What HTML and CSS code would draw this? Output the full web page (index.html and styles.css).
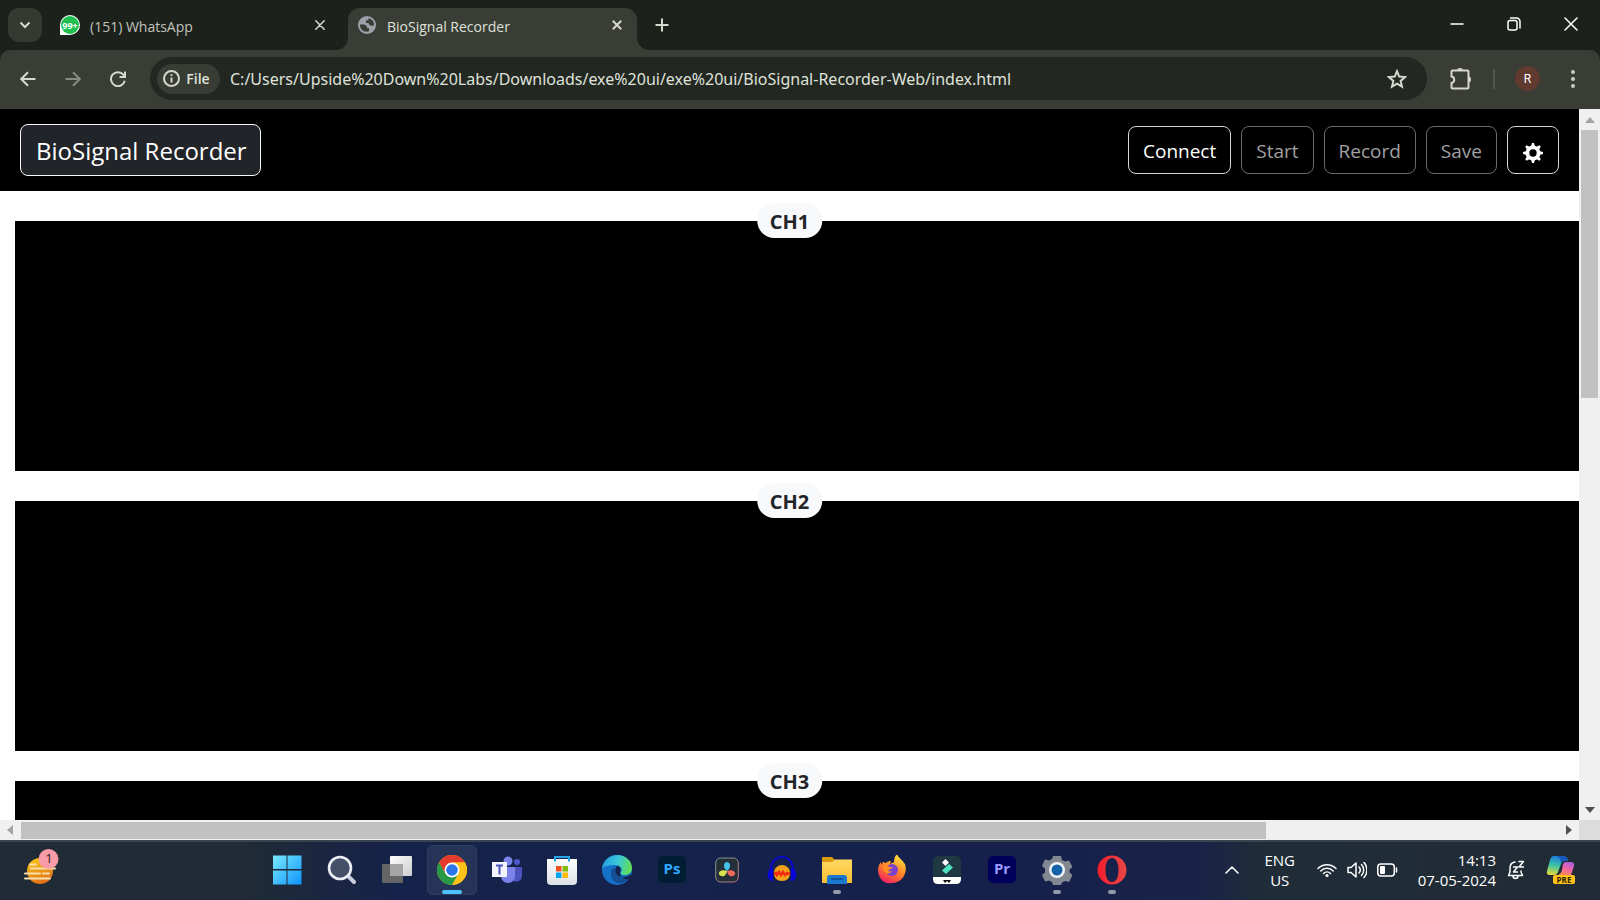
FILE: index.html
```html
<!DOCTYPE html>
<html lang="en">
<head>
<meta charset="utf-8">
<title>BioSignal Recorder</title>
<link rel="stylesheet" href="styles.css">
</head>
<body>
<header class="tabstrip">
  <button class="tab-search" aria-label="Search tabs"><svg width="12" height="8" viewBox="0 0 12 8"><path d="M1.5 1.5 6 6l4.500-4.500" class="line bold"/></svg></button>
  <div class="tab">
    <svg width="20" height="20" viewBox="0 0 20 20"><path d="M0 20V10A10 10 0 1 1 10 20z" fill="#fff"/><circle cx="10" cy="10" r="9" fill="#1fbf50"/><text x="10" y="13.500" text-anchor="middle" class="badge-99">99+</text></svg>
    <span class="tab-title">(151) WhatsApp</span>
    <button class="tab-close" aria-label="Close tab"><svg width="10" height="10" viewBox="0 0 10 10"><path d="M.8.8l8.400 8.400M9.200.8.800 9.200" class="line"/></svg></button>
  </div>
  <div class="tab active">
    <svg width="18" height="18" viewBox="0 0 18 18"><circle cx="9" cy="9" r="9" fill="#9da1aa"/><path d="M2 8.500H6.500L9 10.500V12h2v3.300C6.500 17 1.500 13.500 2 8.500zM10.500 2.200V4L8 4.500V7h2.500l1 2 2 .8H15.800C16.800 6 14 2.800 10.500 2.200z" fill="#3a3d35"/></svg>
    <span class="tab-title">BioSignal Recorder</span>
    <button class="tab-close" aria-label="Close tab"><svg width="10" height="10" viewBox="0 0 10 10"><path d="M.8.8l8.400 8.400M9.200.8.800 9.200" class="line bold"/></svg></button>
  </div>
  <button class="new-tab" aria-label="New tab"><svg width="14" height="14" viewBox="0 0 14 14"><path d="M7 .5v13M.5 7h13" class="line bold"/></svg></button>
  <div class="window-controls">
    <button aria-label="Minimize"><svg width="14" height="14" viewBox="0 0 14 14"><path d="M1 7h12" class="line white"/></svg></button>
    <button aria-label="Restore"><svg width="14" height="14" viewBox="0 0 14 14"><rect x="1" y="3.500" width="9" height="9.500" rx="2" class="line white"/><path d="M3.500 1H9.500A3.500 3.500 0 0 1 13 4.500V11" class="line white"/></svg></button>
    <button aria-label="Close"><svg width="14" height="14" viewBox="0 0 14 14"><path d="M1 1l12 12M13 1 1 13" class="line white"/></svg></button>
  </div>
</header>

<nav class="toolbar">
  <button class="tool" aria-label="Back"><svg width="16" height="16" viewBox="0 0 16 16"><path d="M15.500 8H1.500M8 1.200 1.200 8 8 14.800" class="line bold"/></svg></button>
  <button class="tool dim" aria-label="Forward"><svg width="16" height="16" viewBox="0 0 16 16"><path d="M.5 8h14M8 1.200 14.800 8 8 14.800" class="line bold"/></svg></button>
  <button class="tool" aria-label="Reload"><svg width="16" height="16" viewBox="0 0 16 16"><path d="M14.800 9.800A7 7 0 1 1 13.500 3.800L15 6M15 .5V6H9.500" class="line bold"/></svg></button>
  <div class="omnibox">
    <button class="chip"><svg width="17" height="17" viewBox="0 0 17 17"><circle cx="8.500" cy="8.500" r="7.500" class="line bold"/><path d="M8.500 7.500v5M8.500 4.300v1.800" class="line bold"/></svg>File</button>
    <input class="url" aria-label="Address" value="C:/Users/Upside%20Down%20Labs/Downloads/exe%20ui/exe%20ui/BioSignal-Recorder-Web/index.html">
    <button class="star" aria-label="Bookmark"><svg width="20" height="20" viewBox="0 0 20 20"><path d="M10 2.200l2.200 5.400 5.800.5-4.400 3.800 1.400 5.700-5-3-5 3 1.400-5.700L2 8.100l5.800-.5z" class="line bold"/></svg></button>
  </div>
  <button class="extensions" aria-label="Extensions"><svg width="22" height="22" viewBox="0 0 22 22"><path d="M2.500 2.500H17.500q1 0 1 1V19.500q0 1-1 1H2.500q-1 0-1-1V15a3.300 3.300 0 0 0 0-6.500V3.500q0-1 1-1z" class="line bold"/><path d="M7 2.500a3 2.500 0 0 1 6 0zM18.500 8.500a2.500 3 0 0 1 0 6z" fill="#d5d8cf"/></svg></button>
  <span class="divider"></span>
  <button class="avatar" aria-label="Profile">R</button>
  <button class="menu" aria-label="Menu"><svg width="4" height="18" viewBox="0 0 4 18"><g fill="#c8cbc3"><circle cx="2" cy="2" r="2"/><circle cx="2" cy="9" r="2"/><circle cx="2" cy="16" r="2"/></g></svg></button>
</nav>

<div class="viewport">
  <main class="page">
    <div class="navbar">
      <a class="brand" href="#">BioSignal Recorder</a>
      <div class="actions">
        <button class="btn">Connect</button>
        <button class="btn" disabled>Start</button>
        <button class="btn" disabled>Record</button>
        <button class="btn" disabled>Save</button>
        <button class="btn settings" aria-label="Settings"><svg width="20" height="20" viewBox="0 0 20 20"><g fill="#fff"><circle cx="10" cy="10" r="7.500"/><g><path d="M8.200 3 9 0h2l.8 3v14L11 20H9l-.8-3z"/><path d="M8.200 3 9 0h2l.8 3v14L11 20H9l-.8-3z" transform="rotate(45 10 10)"/><path d="M8.200 3 9 0h2l.8 3v14L11 20H9l-.8-3z" transform="rotate(90 10 10)"/><path d="M8.200 3 9 0h2l.8 3v14L11 20H9l-.8-3z" transform="rotate(135 10 10)"/></g></g><circle cx="10" cy="10" r="3.700" fill="#000"/></svg></button>
      </div>
    </div>
    <section class="channel"><h2 class="label">CH1</h2><div class="plot"></div></section>
    <section class="channel"><h2 class="label">CH2</h2><div class="plot"></div></section>
    <section class="channel"><h2 class="label">CH3</h2><div class="plot"></div></section>
  </main>
  <div class="scroll-y">
    <svg width="10" height="6" viewBox="0 0 10 6"><path d="M0 6 5 0l5 6z" fill="#a3a3a3"/></svg>
    <div class="track"><div class="thumb"></div></div>
    <svg width="10" height="6" viewBox="0 0 10 6"><path d="M0 0h10L5 6z" fill="#505050"/></svg>
  </div>
  <div class="scroll-x">
    <svg width="6" height="10" viewBox="0 0 6 10"><path d="M6 0v10L0 5z" fill="#a3a3a3"/></svg>
    <div class="track"><div class="thumb"></div></div>
    <svg width="6" height="10" viewBox="0 0 6 10"><path d="M0 0v10l6-5z" fill="#505050"/></svg>
  </div>
  <div class="corner"></div>
</div>

<footer class="taskbar">
  <button class="widgets" aria-label="Widgets">
    <svg width="36" height="36" viewBox="0 0 36 36"><defs><linearGradient id="sun" x1="0" y1="0" x2=".4" y2="1"><stop offset="0" stop-color="#fbd011"/><stop offset="1" stop-color="#e2711a"/></linearGradient></defs><circle cx="16" cy="22" r="13" fill="url(#sun)"/><path d="M6 15.500h6M7 19.500h24M1 24.500h15M19 24.500h6M1 29.500h25" stroke="#f9dfae" stroke-width="2" stroke-linecap="round"/><circle cx="24.500" cy="10" r="10" fill="#f99ba6"/><text x="25" y="14" text-anchor="middle" class="count">1</text></svg>
  </button>
  <div class="apps">
    <button class="app" aria-label="Start"><svg width="30" height="30" viewBox="0 0 30 30"><defs><linearGradient id="win" x1="0" y1="0" x2="1" y2="1"><stop offset="0" stop-color="#7aeaff"/><stop offset="1" stop-color="#0e94fb"/></linearGradient></defs><path d="M1 .5h13.500V14H1zM15.500.5H29.500V14h-14zM1 15.500h13.500v14H1zM15.500 15.500h14v14h-14z" fill="url(#win)"/></svg></button>
    <button class="app" aria-label="Search"><svg width="30" height="30" viewBox="0 0 30 30"><path d="M20 20l7 7" stroke="#c9cedb" stroke-width="4" stroke-linecap="round"/><circle cx="13" cy="13" r="11" fill="#444f68" stroke="#eceef4" stroke-width="2.600"/></svg></button>
    <button class="app" aria-label="Task view"><svg width="32" height="30" viewBox="0 0 32 30"><defs><linearGradient id="tv" x1="0" y1="0" x2="1" y2="1"><stop offset="0" stop-color="#fff"/><stop offset="1" stop-color="#ccc"/></linearGradient></defs><rect x="1" y="9" width="21" height="19" rx="1" fill="#646566"/><rect x="9" y="1" width="22" height="20" rx="1" fill="url(#tv)"/><path d="M9 9h13v12H9z" fill="#a5a5a5"/></svg></button>
    <button class="app selected" aria-label="Chrome"><svg width="30" height="30" viewBox="0 0 30 30"><circle cx="15" cy="15" r="15" fill="#fbc116"/><path d="M2 7.500A15 15 0 0 1 28 7.500H15L8.500 18.700z" fill="#e33b2e"/><path d="M2 7.500A15 15 0 0 0 15 30l6.500-11.200L8.500 18.800z" fill="#269846"/><path d="M28 7.500H15V15l6.500 3.800L15 30A15 15 0 0 0 28 7.500z" fill="#fbc116"/><circle cx="15" cy="15" r="7.500" fill="#fff"/><circle cx="15" cy="15" r="5.800" fill="#2a75ea"/></svg></button>
    <button class="app" aria-label="Teams"><svg width="30" height="30" viewBox="0 0 30 30"><circle cx="16" cy="6" r="4.500" fill="#7b83eb"/><circle cx="25" cy="7" r="3" fill="#5059c9"/><path d="M19 12h11v9a6 6 0 0 1-9 5z" fill="#4b53bc"/><path d="M9 12h14v9a7 7 0 0 1-14 0z" fill="#7b83eb"/><path d="M0 7h15v15H0z" fill="#f4f4ff"/><path d="M4 10.500h7M7.500 10.500v9" stroke="#4b53bc" stroke-width="2"/></svg></button>
    <button class="app" aria-label="Microsoft Store"><svg width="30" height="30" viewBox="0 0 30 30"><defs><linearGradient id="bag" x1="0" y1="0" x2="0" y2="1"><stop offset="0" stop-color="#fff"/><stop offset="1" stop-color="#dcdfe4"/></linearGradient></defs><path d="M0 4h30v22q0 4-4 4H4q-4 0-4-4z" fill="url(#bag)"/><path d="M8 6.500V2h14v4.500" fill="none" stroke="#26a4e8" stroke-width="2"/><path d="M9 11h5.500v5.500H9z" fill="#f25022"/><path d="M15.500 11H21v5.500h-5.500z" fill="#7fba00"/><path d="M9 17.500h5.500V23H9z" fill="#00a4ef"/><path d="M15.500 17.500H21V23h-5.500z" fill="#ffb900"/></svg></button>
    <button class="app" aria-label="Edge"><svg width="30" height="30" viewBox="0 0 30 30"><defs><linearGradient id="edge" x1="0" y1=".3" x2="1" y2=".5"><stop offset="0" stop-color="#249bdc"/><stop offset=".5" stop-color="#38c8dc"/><stop offset="1" stop-color="#62df55"/></linearGradient></defs><circle cx="15" cy="15" r="15" fill="#1471c7"/><path d="M0 14C1 5 8 0 15 0c9 0 15 6 15 13 0 5-4 7-7 7-4 0-5-2-4-3 2-2 0-7-6-7C7 10 2 11 0 14z" fill="url(#edge)"/><path d="M13 12c-5 2-6 10 0 15 5 2.500 12 0 15-4-5 2-14 1-15-11z" fill="#144f94"/><path d="M18 17c2-3 0-6-3-6-3 3-2 11 6 11 3 0 5-1 7-2l3 1-3 3c-5 1-10-1-10-7z" fill="#15224a"/></svg></button>
    <button class="app" aria-label="Photoshop"><svg width="28" height="28" viewBox="0 0 28 28"><rect width="28" height="27" rx="5" fill="#001d34"/><text x="14" y="18" text-anchor="middle" class="adobe ps">Ps</text></svg></button>
    <button class="app" aria-label="DaVinci Resolve"><svg width="24" height="26" viewBox="0 0 24 26"><defs><linearGradient id="dv" x1="0" y1="0" x2="1" y2="1"><stop offset="0" stop-color="#6c9d91"/><stop offset="1" stop-color="#c27978"/></linearGradient></defs><rect x=".7" y="1" width="22.600" height="24" rx="5" fill="#252f39" stroke="url(#dv)"/><path d="M12 14c-5-4-3-9 0-9s5 5 0 9z" fill="#40c5e8"/><path d="M12 14c-1 7-7 6-8 3s4-5 8-3z" fill="#d7e34d"/><path d="M12 14c1 7 7 6 8 3s-4-5-8-3z" fill="#f1685d"/></svg></button>
    <button class="app" aria-label="Audacity"><svg width="30" height="28" viewBox="0 0 30 28"><path d="M4 16C2-4 28-4 26 16" fill="none" stroke="#0a08c5" stroke-width="2.200"/><path d="M7 17c0-5 4-8 8-8s8 3 8 8c0 5-3 8-8 8s-8-3-8-8z" fill="#f0a019"/><path d="M7 18l2-1 1 2 2-3 2 3 2-3 2 3 2-2 1 1 2-1" fill="none" stroke="#f42a12" stroke-width="2.500"/><path d="M6 12v13C-1 25-1 13 6 12zM24 12v13c7 0 7-12 0-13z" fill="#0806dc"/></svg></button>
    <button class="app running" aria-label="File Explorer"><svg width="32" height="28" viewBox="0 0 32 28"><defs><linearGradient id="fold" x1="0" y1="0" x2="0" y2="1"><stop offset="0" stop-color="#ffd963"/><stop offset="1" stop-color="#f8bd30"/></linearGradient></defs><path d="M1 2q0-1 1-1h9l3 3v4H1z" fill="#d99a12"/><path d="M1 6h10l3-2.500h17V27H1z" fill="url(#fold)"/><path d="M6 28v-6q0-3 3-3h14q3 0 3 3v6z" fill="#1879ce"/><path d="M10 23h12" stroke="#0b4b92" stroke-width="1.500"/></svg></button>
    <button class="app" aria-label="Firefox"><svg width="30" height="30" viewBox="0 0 30 30"><defs><linearGradient id="fx" x1=".8" y1="0" x2=".3" y2="1"><stop offset="0" stop-color="#ffec45"/><stop offset=".5" stop-color="#ff8a22"/><stop offset="1" stop-color="#f22162"/></linearGradient></defs><path d="M1 15c0-3 1-6 3-8v3l2-3 3 1c2-2 4-2 5-2l-1 3 4-2c0-3 1-6 3-8 1 4 5 5 7 9l1 1c3 9-3 19-13 19C7 30 1 23 1 15z" fill="url(#fx)"/><circle cx="15" cy="15" r="6" fill="#7b42cf"/><path d="M6 11c5-1 6 2 10 1-1 2-4 2-5 4 2 1 4 0 4 0-5 6-10 0-9-5z" fill="#ff8e20"/></svg></button>
    <button class="app" aria-label="Filmora"><svg width="28" height="28" viewBox="0 0 28 28"><rect width="28" height="28" rx="5" fill="#203841"/><path d="M0 21h28v2q0 5-5 5H5q-5 0-5-5z" fill="#fff"/><path d="M12.500 3l3.500 3.500-3.500 3.500L9 6.500z" fill="#fff"/><path d="M9 14.500l7-6.500 4 3.500-7 6.500z" fill="#50e3c2"/><path d="M10 24l2 3 2-2 2 2 2-3z" fill="#111"/></svg></button>
    <button class="app" aria-label="Premiere Pro"><svg width="28" height="28" viewBox="0 0 28 28"><rect width="28" height="27" rx="5" fill="#00005b"/><text x="14" y="18" text-anchor="middle" class="adobe pr">Pr</text></svg></button>
    <button class="app running" aria-label="Settings"><svg width="30" height="30" viewBox="0 0 30 30"><path d="M11 1h8l1 4 3 1.500 4-1 3.500 6.500-3 2.500v3l3 2.500L27 27l-4-1-3 1.500-1 2.500h-8l-1-3-3-1.500-4 1-3-6.500 3-2.500v-4L0 11l3-6.500 4 1L10 4z" fill="#818891"/><circle cx="15" cy="15" r="8" fill="#eff3f6"/><circle cx="15" cy="15" r="5.500" fill="#1562aa"/></svg></button>
    <button class="app running" aria-label="Opera"><svg width="30" height="30" viewBox="0 0 30 30"><defs><linearGradient id="op" x1="0" y1="0" x2="1" y2="0"><stop offset="0" stop-color="#f31c2d"/><stop offset="1" stop-color="#e84746"/></linearGradient></defs><path fill-rule="evenodd" d="M15 .5a14.500 14.500 0 1 1 0 29 14.500 14.500 0 1 1 0-29zM15 3c-4.500 0-6.500 5-6.500 12s2 12 6.500 12 6.500-5 6.500-12S19.500 3 15 3z" fill="url(#op)"/></svg></button>
  </div>
  <div class="tray">
    <button class="overflow" aria-label="Hidden icons"><svg width="14" height="8" viewBox="0 0 14 8"><path d="M1 7l6-6 6 6" class="line white"/></svg></button>
    <button class="lang"><span>ENG</span><span>US</span></button>
    <button class="status" aria-label="Network, sound and battery">
      <svg width="20" height="16" viewBox="0 0 20 16"><path d="M1 6.500a12.500 12.500 0 0 1 18 0M3.800 9a8.600 8.600 0 0 1 12.400 0M6.500 11.500a5 5 0 0 1 7 0" class="line white"/><circle cx="10" cy="13.500" r="1.600" fill="#fff"/></svg>
      <svg width="20" height="18" viewBox="0 0 20 18"><path d="M1 6.500h3L9 2v14l-5-4.500H1zM12 6a4.500 4.500 0 0 1 0 6M14.500 3.500a8 8 0 0 1 0 11M17 1.500a11 11 0 0 1 0 15" class="line white"/></svg>
      <svg width="21" height="14" viewBox="0 0 21 14"><rect x=".8" y="1" width="16.500" height="12" rx="3" class="line white"/><rect x="3" y="3" width="5" height="8" rx="1" fill="#fff"/><path d="M19.500 5v4" class="line white"/></svg>
    </button>
    <button class="clock"><span>14:13</span><span>07-05-2024</span></button>
    <button class="bell" aria-label="Notifications"><svg width="18" height="20" viewBox="0 0 18 20"><path d="M8 2C4.500 2.500 3 5 3 8v4l-1.500 3.500h14L14 12v-1M6 16a2.500 2.500 0 0 0 5 0M6.500 7h4l-4 5h4M12 1.500h4.500L12 7h4.500" class="line white"/></svg></button>
    <button class="copilot" aria-label="Copilot"><svg width="30" height="30" viewBox="0 0 30 30"><defs><linearGradient id="c1" x1=".5" y1="0" x2=".3" y2="1"><stop offset="0" stop-color="#1c7ce0"/><stop offset=".5" stop-color="#3cc3a5"/><stop offset="1" stop-color="#e6d83b"/></linearGradient><linearGradient id="c2" x1=".8" y1="0" x2=".3" y2="1"><stop offset="0" stop-color="#a05fe0"/><stop offset=".5" stop-color="#f065a8"/><stop offset="1" stop-color="#f58a55"/></linearGradient></defs><path d="M8 1h9q4 0 5 5h-4q-2 0-3 3l-3 8q-1 3-4 3H4q-4 0-3-4L4 5q1-4 4-4z" fill="url(#c1)"/><path d="M17 1q4 0 5 5h-4q-2 0-3 2-1-7-5-7z" fill="#1858bd"/><path d="M19 7h6q4 0 3 4l-3 9H12q3-1 4-5l1-6z" fill="url(#c2)"/><rect x="7" y="20" width="22" height="9" rx="2" fill="#ffc21b"/><text x="18" y="27.500" text-anchor="middle" class="pre">PRE</text></svg></button>
  </div>
</footer>
</body>
</html>
```

FILE: styles.css
```css
* { box-sizing: border-box; }
body {
  margin: 0;
  height: 100vh;
  display: flex;
  flex-direction: column;
  overflow: hidden;
  background: #1d211b;
  font-family: "Open Sans", "Noto Sans", sans-serif;
}
button, input { font: inherit; color: inherit; background: none; border: 0; padding: 0; margin: 0; }
button { display: flex; align-items: center; justify-content: center; flex: none; }
svg { display: block; flex: none; }
.line { fill: none; stroke: #d5d8cf; stroke-width: 1.500; stroke-linecap: round; stroke-linejoin: round; }
.line.bold { stroke-width: 2; stroke-linecap: butt; stroke-linejoin: miter; }
.line.white { stroke: #fff; }

/* Tab strip */
.tabstrip { flex: none; height: 50px; display: flex; align-items: flex-end; padding-left: 8px; color: #d3d5ce; font-size: 14px; }
.tab-search { width: 34px; height: 34px; margin-bottom: 8px; border-radius: 11px; background: #353932; }
.tab { display: flex; align-items: center; width: 296px; height: 42px; padding: 0 8px 8px 18px; gap: 10px; }
.tab-title { flex: 1; white-space: nowrap; color: #c1c4bc; line-height: 20px; padding-top: 3px; }
.tab-close { width: 20px; height: 20px; }
.tab.active { position: relative; width: 289px; margin-left: 10px; padding: 0 10px 8px; gap: 11px; background: #3a3d35; border-radius: 12px 12px 0 0; }
.tab.active::before, .tab.active::after { content: ""; position: absolute; bottom: 0; width: 12px; height: 12px; }
.tab.active::before { left: -12px; background: radial-gradient(circle at 0 0, transparent 12px, #3a3d35 12px); }
.tab.active::after { right: -12px; background: radial-gradient(circle at 100% 0, transparent 12px, #3a3d35 12px); }
.tab.active .tab-title { color: #dfe1da; }
.new-tab { width: 34px; height: 34px; margin: 0 0 8px 8px; }
.window-controls { display: flex; margin-left: auto; height: 50px; padding: 0 1px 2px 0; }
.window-controls button { width: 57px; }
.badge-99 { font: 700 9px "Open Sans", sans-serif; fill: #fff; }

/* Toolbar */
.toolbar { flex: none; height: 59px; display: flex; align-items: center; padding: 0 12px 2px 5px; background: #3a3d35; border-radius: 10px 10px 0 0; }
.tool { width: 45px; height: 40px; }
.tool.dim { opacity: .5; }
.omnibox { flex: 1; display: flex; align-items: center; height: 43px; margin-left: 10px; padding: 0 20px 0 7px; border-radius: 22px; background: #232721; color: #dfe2da; }
.chip { gap: 6px; width: 63px; height: 30px; padding-right: 4px; border-radius: 15px; background: #393c35; font-size: 14px; font-weight: 600; }
.url { flex: 1; min-width: 0; margin-left: 10px; font-family: "Noto Sans", "Open Sans", sans-serif; font-size: 16px; outline: 0; }
.extensions { width: 32px; margin-left: 18px; }
.divider { width: 2px; height: 20px; margin-left: 16px; background: #52554d; }
.avatar { width: 25px; height: 25px; margin-left: 20px; border-radius: 50%; background: #60392f; color: #fff; font: 12px Roboto, sans-serif; }
.menu { width: 30px; height: 30px; margin-left: 18px; }

/* Page */
.viewport { flex: 1; min-height: 0; display: grid; grid-template: minmax(0, 1fr) 20px / minmax(0, 1fr) 21px; background: #f0f0f0; }
.page { overflow: hidden; background: #fff; }
.navbar { display: flex; align-items: center; justify-content: space-between; height: 82px; padding: 0 20px; background: #000; color: #fff; }
.brand { padding: 10px 13px 8px 15px; border: 1px solid #f8f9fa; border-radius: 8px; background: #212529; color: #fff; font-size: 24px; line-height: 32px; text-decoration: none; white-space: nowrap; }
.actions { display: flex; gap: 10px; }
.btn { height: 48px; padding: 2px 14px 0; border: 1px solid #d5d6d7; border-radius: 8px; font-size: 19px; }
.btn:disabled { color: #a0a1a2; border-color: #6a6b6c; }
.btn.settings { width: 52px; padding: 6px 0 0; }
.channel { position: relative; margin-top: 30px; padding-left: 15px; }
.plot { height: 250px; background: #000; }
.label { position: absolute; top: -18px; left: 50%; transform: translateX(-50%); margin: 0; padding: 2px 13px 0; border-radius: 17px; background: #f8f9fa; color: #212529; font-size: 20px; line-height: 33px; font-weight: 700; }

/* Scrollbars */
.scroll-y, .scroll-x { display: flex; align-items: center; justify-content: space-between; }
.scroll-y { flex-direction: column; padding: 8px 0 7px; }
.scroll-x { padding: 0 7px; gap: 8px; }
.track { flex: 1; }
.scroll-y .track { width: 17px; margin: 7px 0; }
.scroll-y .thumb { height: 40%; background: #c1c1c1; }
.scroll-x .thumb { width: 81%; height: 17px; background: #c1c1c1; }
.corner { background: #dcdcdc; }

/* Taskbar */
.taskbar { flex: none; height: 60px; display: flex; align-items: center; padding: 0 24px 2px 0; border-top: 2px solid #38434e; background: linear-gradient(90deg, #202b35 0, #202b35 15%, #15224a 25%, #15214b 65%, #1a2247 75%, #202c37 79%, #202b35 100%); color: #fff; }
.widgets { width: 36px; margin: 0 202px 6px 24px; }
.apps { display: flex; gap: 5px; }
.app { position: relative; width: 50px; height: 50px; border-radius: 5px; }
.app.selected { background: #263458; border: 1px solid #303c60; }
.app.selected::after, .app.running::after { content: ""; position: absolute; left: 50%; transform: translateX(-50%); bottom: 1px; width: 8px; height: 4px; border-radius: 2px; background: #9299ab; }
.app.selected::after { bottom: 0; width: 20px; background: #4cc2ff; }
.tray { display: flex; align-items: center; margin-left: auto; font-size: 15px; line-height: 20px; }
.overflow { width: 30px; }
.lang { flex-direction: column; width: 50px; margin-left: 8px; }
.status { gap: 10px; margin-left: 12px; }
.clock { flex-direction: column; align-items: flex-end; margin-left: 20px; }
.bell { margin-left: 11px; }
.copilot { margin-left: 21px; }
.count { font: 13px "Open Sans", sans-serif; fill: #222; }
.adobe { font: 700 15px "Open Sans", sans-serif; }
.ps { fill: #31a8ff; }
.pr { fill: #9999ff; }
.pre { font: 700 8px "Open Sans", sans-serif; fill: #2b2000; }
```
